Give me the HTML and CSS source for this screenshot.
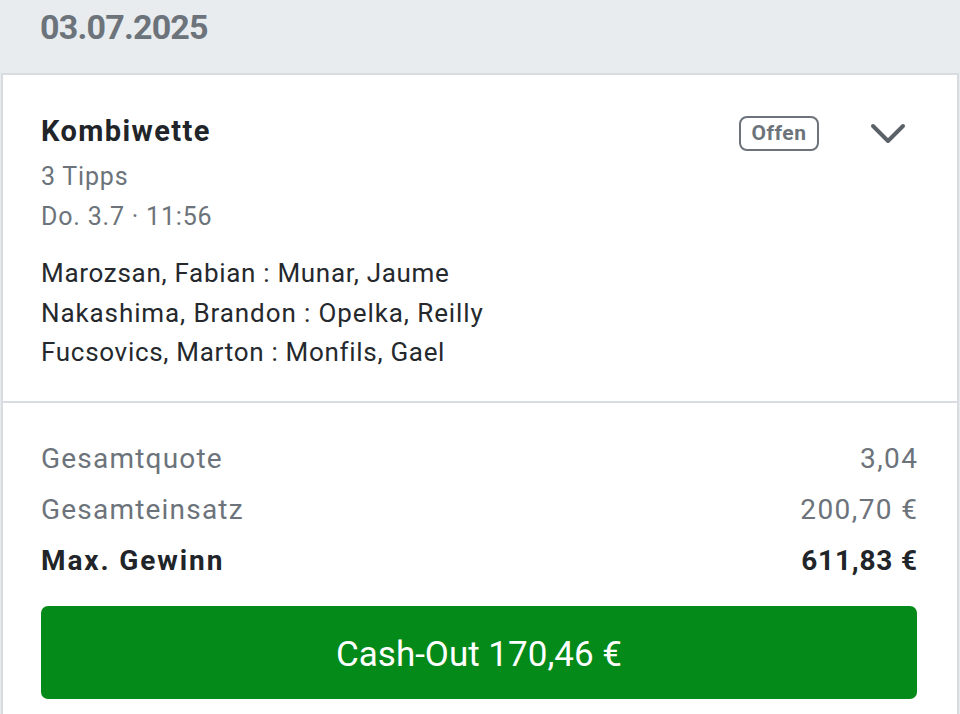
FILE: index.html
```html
<!DOCTYPE html>
<html lang="de">
<head>
    <meta charset="UTF-8">
    <meta name="viewport" content="width=device-width, initial-scale=1.0">
    <title>Wettschein 03.07.2025</title>
    <link rel="stylesheet" href="styles.css">
</head>
<body>
    <div class="day_head">03.07.2025</div>

    <div class="bet_card">
        <div class="bet_top">
            <div class="title_row">
                <h2 class="bet_title">Kombiwette</h2>
                <span class="status">Offen</span>
                <svg class="toggle" width="36" height="22" viewBox="0 0 36 22">
                    <path d="M3 3 L18 18 L33 3" fill="none" stroke="#5b6168" stroke-width="4" stroke-linecap="round" stroke-linejoin="round"/>
                </svg>
            </div>
            <p class="meta">3 Tipps</p>
            <p class="meta">Do. 3.7 · 11:56</p>
            <ul class="matches">
                <li>Marozsan, Fabian : Munar, Jaume</li>
                <li class="wide">Nakashima, Brandon : Opelka, Reilly</li>
                <li>Fucsovics, Marton : Monfils, Gael</li>
            </ul>
        </div>

        <div class="bet_bottom">
            <div class="sum_row">
                <span class="label">Gesamtquote</span>
                <span class="value">3,04</span>
            </div>
            <div class="sum_row">
                <span class="label">Gesamteinsatz</span>
                <span class="value">200,70 €</span>
            </div>
            <div class="sum_row strong">
                <span class="label">Max. Gewinn</span>
                <span class="value">611,83 €</span>
            </div>
            <button class="cashout">Cash-Out 170,46 €</button>
        </div>
    </div>
</body>
</html>
```

FILE: styles.css
```css
* {
    margin: 0;
    padding: 0;
    box-sizing: border-box;
}

body {
    background-color: #e9ecef;
    font-family: Roboto, "Liberation Sans", sans-serif;
    color: #212529;
    height: 714px;
    overflow: hidden;
}

li {
    list-style: none;
}

.day_head {
    height: 73px;
    padding: 2px 0 0 40px;
    font-size: 34px;
    line-height: 50px;
    font-weight: bold;
    letter-spacing: -0.8px;
    color: #6c737a;
}

.bet_card {
    background-color: #fff;
    margin: 0 1px;
    border: 2px solid #d8dce0;
    border-bottom: 0;
    min-height: 641px;
}

.bet_top {
    padding: 38px 40px 28px 38px;
    border-bottom: 2px solid #d8dce0;
}

.title_row {
    display: flex;
    align-items: center;
    height: 36px;
    margin-bottom: 8px;
}

.bet_title {
    flex: 1;
    font-size: 29px;
    line-height: 36px;
    letter-spacing: 1.4px;
    font-weight: bold;
}

.status {
    border: 2px solid #6c737a;
    border-radius: 8px;
    width: 80px;
    height: 35px;
    margin-top: 4px;
    text-align: center;
    font-size: 21px;
    line-height: 31px;
    font-weight: bold;
    letter-spacing: 0.5px;
    color: #6c737a;
}

.toggle {
    margin: 6px 11px 0 51px;
}

.meta {
    font-size: 25px;
    line-height: 39.5px;
    letter-spacing: 0.8px;
    color: #6c737a;
}

.matches {
    margin-top: 18px;
}

.matches li {
    font-size: 26px;
    line-height: 39.5px;
    letter-spacing: 0.7px;
    color: #25292d;
}

.matches li.wide {
    letter-spacing: 0.9px;
}

.bet_bottom {
    padding: 30px 40px 0 38px;
}

.sum_row {
    display: flex;
    justify-content: space-between;
    font-size: 28px;
    line-height: 51px;
    color: #6c737a;
}

.sum_row .label {
    letter-spacing: 1.2px;
}

.sum_row .value {
    letter-spacing: 1.4px;
    margin-right: -1.4px;
}

.sum_row.strong {
    font-weight: bold;
    color: #212529;
}

.sum_row.strong .label {
    letter-spacing: 1.9px;
}

.sum_row.strong .value {
    letter-spacing: 0.8px;
    margin-right: -0.8px;
}

.cashout {
    display: block;
    width: 100%;
    height: 93px;
    margin-top: 20px;
    padding-top: 4px;
    border: 0;
    border-radius: 7px;
    background-color: #048a18;
    color: #fff;
    font-family: Roboto, "Liberation Sans", sans-serif;
    font-size: 35px;
}
```
